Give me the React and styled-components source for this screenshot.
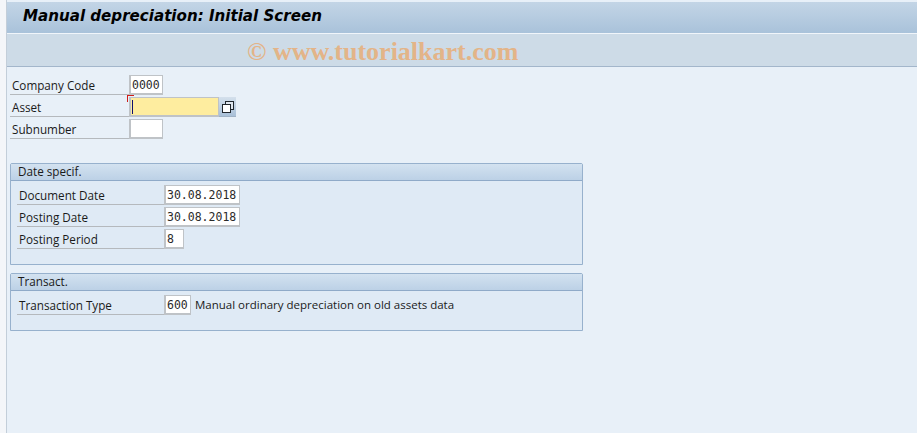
import React from 'react';
import styled, { createGlobalStyle } from 'styled-components';

const Global = createGlobalStyle`
  html, body { margin: 0; padding: 0; height: 100%; overflow: hidden; background: #e8f0f8; }
  #root { height: 100%; }
`;

const Page = styled.div`
  display: flex;
  width: 917px;
  height: 433px;
  font-family: "Open Sans", "DejaVu Sans", sans-serif;
  font-size: 11.7px;
  color: #1a1a1a;
  background: #e8f0f8;
`;
const Strip = styled.div`
  width: 6px;
  background: #f4f6f9;
  border-right: 1px solid #c3ced9;
`;
const Main = styled.div`
  flex: 1;
  display: flex;
  flex-direction: column;
`;
const TitleBar = styled.div`
  margin-top: 2px;
  padding: 0 0 4px 16px;
  height: 27px;
  display: flex;
  align-items: center;
  background: linear-gradient(#c3d5e6, #a9c2da);
  border-bottom: 1px solid #f0f5fa;
`;
const Title = styled.h1`
  margin: 0;
  font-family: "DejaVu Sans", sans-serif;
  font-size: 15.1px;
  font-weight: bold;
  font-style: italic;
  color: #000;
`;
const Toolbar = styled.div`
  height: 28px;
  padding: 4px 0 0 240px;
  display: flex;
  align-items: center;
  background: #cddbe7;
  border-bottom: 1px solid #a3b6cb;
`;
const Watermark = styled.span`
  font-family: "Liberation Serif", serif;
  font-size: 26px;
  font-weight: bold;
  color: #e3b488;
`;
const Content = styled.div`
  padding: 8px 0 0 3px;
  display: flex;
  flex-direction: column;
`;
const Rows = styled.div`
  display: flex;
  flex-direction: column;
  gap: 2px;
`;
const Row = styled.div`
  display: flex;
  align-items: stretch;
  height: 20px;
`;
const Label = styled.div`
  width: ${p => p.$w}px;
  box-sizing: border-box;
  padding-left: 2px;
  line-height: ${p => p.$lh || 20}px;
  border-bottom: 1px solid #b5b9bd;
  height: 20px;
`;
const Field = styled.div`
  position: relative;
  box-sizing: border-box;
  width: ${p => p.$w}px;
  height: 20px;
  padding-left: 1px;
  line-height: 19px;
  font-family: "DejaVu Sans Mono", monospace;
  font-size: 11.5px;
  color: #2a2a2a;
  background: ${p => (p.$required ? '#feed9f' : '#fff')};
  border-style: solid;
  border-width: 1px 1px 2px 2px;
  border-color: #bfc3c7;
`;
const Corner = styled.span`
  position: absolute;
  left: -4px;
  top: -3px;
  width: 6px;
  height: 6px;
  border-left: 1px solid #d01c18;
  border-top: 1px solid #d01c18;
`;
const Caret = styled.span`
  position: absolute;
  left: 1px;
  top: 2px;
  width: 1px;
  height: 14px;
  background: #10106e;
`;
const HelpButton = styled.div`
  width: 17px;
  height: 19px;
  display: flex;
  align-items: center;
  justify-content: center;
  background: linear-gradient(#d4e0ec, #a9c0d8);
  border-bottom: 1px solid #9fb2c6;
`;
const Group = styled.section`
  width: 573px;
  height: ${p => p.$h}px;
  margin-top: ${p => p.$mt}px;
  box-sizing: border-box;
  background: #dfeaf5;
  border: 1px solid #97b1cd;
  border-radius: 2px 2px 0 0;
`;
const GroupHead = styled.div`
  height: 17px;
  box-sizing: border-box;
  padding-left: 7px;
  line-height: 15px;
  background: linear-gradient(#d3e2f0, #bcd1e6);
  border-bottom: 1px solid #8faac8;
`;
const GroupBody = styled.div`
  padding: 4px 0 0 6px;
`;
const Note = styled.div`
  margin-left: 4px;
  line-height: 20px;
  font-size: 11.5px;
`;

const CopyIcon = () => (
  <svg width="14" height="14" viewBox="0 0 14 14">
    <rect x="4.5" y="1.5" width="8" height="8" fill="#dfe6ee" stroke="#20262c" />
    <rect x="1.5" y="4.5" width="8" height="8" fill="#fff" stroke="#20262c" />
  </svg>
);

const App = () => (
  <Page>
    <Global />
    <Strip />
    <Main>
      <TitleBar>
        <Title>Manual depreciation: Initial Screen</Title>
      </TitleBar>
      <Toolbar>
        <Watermark>© www.tutorialkart.com</Watermark>
      </Toolbar>
      <Content>
        <Rows>
          <Row>
            <Label $w={119} $lh={21}>Company Code</Label>
            <Field $w={34}>0000</Field>
          </Row>
          <Row>
            <Label $w={119} $lh={21}>Asset</Label>
            <Field $w={90} $required>
              <Corner />
              <Caret />
            </Field>
            <HelpButton><CopyIcon /></HelpButton>
          </Row>
          <Row>
            <Label $w={119} $lh={21}>Subnumber</Label>
            <Field $w={34} />
          </Row>
        </Rows>
        <Group $h={102} $mt={24}>
          <GroupHead>Date specif.</GroupHead>
          <GroupBody>
            <Rows>
              <Row>
                <Label $w={147}>Document Date</Label>
                <Field $w={76}>30.08.2018</Field>
              </Row>
              <Row>
                <Label $w={147}>Posting Date</Label>
                <Field $w={76}>30.08.2018</Field>
              </Row>
              <Row>
                <Label $w={147}>Posting Period</Label>
                <Field $w={20}>8</Field>
              </Row>
            </Rows>
          </GroupBody>
        </Group>
        <Group $h={58} $mt={8}>
          <GroupHead>Transact.</GroupHead>
          <GroupBody>
            <Row>
              <Label $w={147}>Transaction Type</Label>
              <Field $w={27}>600</Field>
              <Note>Manual ordinary depreciation on old assets data</Note>
            </Row>
          </GroupBody>
        </Group>
      </Content>
    </Main>
  </Page>
);

export default App;
